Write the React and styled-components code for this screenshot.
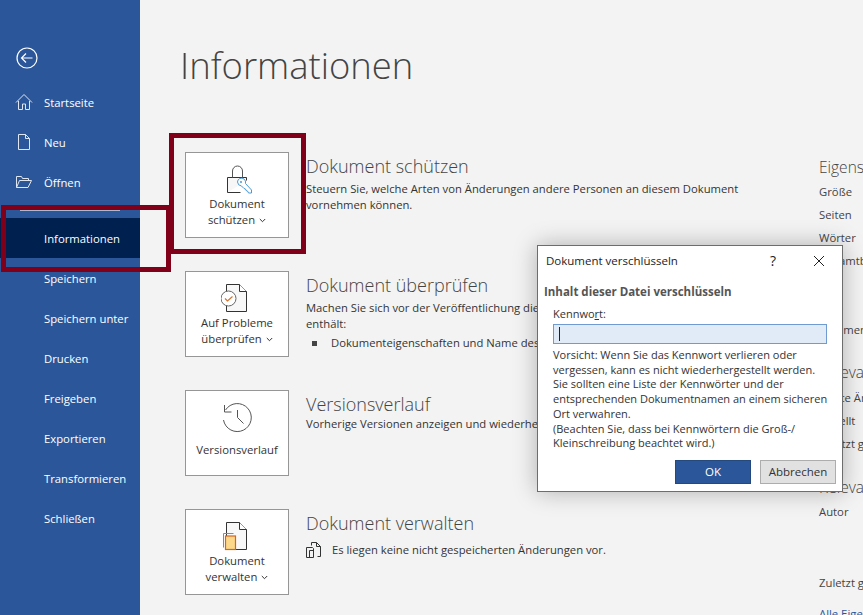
import React from 'react';
import styled, { createGlobalStyle } from 'styled-components';

const GlobalStyle = createGlobalStyle`
  html, body { margin: 0; padding: 0; background: #f3f3f3; }
  body { font-family: "Open Sans", "Noto Sans", sans-serif; font-size: 12px; color: #444; }
`;

const Page = styled.div`
  position: relative;
  display: flex;
  width: 863px;
  height: 615px;
  overflow: hidden;
  background: #f3f3f3;
`;

// Left blue backstage nav
const Sidebar = styled.nav`
  flex: 0 0 140px;
  display: flex;
  flex-direction: column;
  background: #2b579a;
  color: #fff;
  padding-top: 46px;
`;
const BackButton = styled.div`
  height: 24px;
  padding-left: 15px;
  margin-bottom: 12px;
`;
const NavItem = styled.div`
  display: flex;
  align-items: center;
  height: 40px;
  font-size: 11.3px;
  background: ${({ $active }) => ($active ? '#002050' : 'transparent')};
`;
const NavIcon = styled.span`
  flex: 0 0 44px;
  display: flex;
  justify-content: center;
  padding-left: 12px;
  box-sizing: border-box;
  padding-right: 8px;
`;
const NavRule = styled.div`
  height: 1px;
  margin: 8px 20px 7px;
  background: #a9b9d2;
`;

const Main = styled.main`
  flex: 0 0 679px;
  padding-left: 40px;
  box-sizing: border-box;
`;
const Title = styled.h1`
  margin: 36px 0 58px;
  height: 58px;
  font-size: 36.4px;
  line-height: 58px;
  font-weight: 300;
  color: #444;
`;
const Sections = styled.div`
  display: flex;
  flex-direction: column;
  gap: 33px;
  margin-left: 5px;
`;
const Section = styled.section`
  display: flex;
  gap: 17px;
  height: 86px;
  width: 634px;
`;
const TileButton = styled.div`
  flex: 0 0 104px;
  box-sizing: border-box;
  height: 86px;
  display: flex;
  flex-direction: column;
  align-items: center;
  padding-top: 11px;
  background: #fff;
  border: 1px solid #969696;
`;
const TileIcon = styled.div`
  height: 32px;
  svg { display: block; }
`;
const TileLabel = styled.div`
  height: 32px;
  display: flex;
  flex-direction: column;
  justify-content: center;
  text-align: center;
  font-size: 11.3px;
  line-height: 16px;
  white-space: nowrap;
  color: #333;
`;
const SectionBody = styled.div`
  flex: 1;
  min-width: 0;
  font-size: 11.25px;
  line-height: 16px;
  color: #333;
`;
const SectionTitle = styled.h2`
  margin: 2px 0 3px;
  font-size: 18px;
  line-height: 24px;
  font-weight: 300;
  color: #444;
`;
const Description = styled.p`
  margin: ${({ $top }) => $top || 0}px 0 0;
  width: 445px;
`;
const Bullet = styled.div`
  display: flex;
  align-items: center;
  gap: 14px;
  padding-left: 6px;
  margin-top: 3px;
  white-space: nowrap;
  &::before {
    content: '';
    width: 5px;
    height: 5px;
    background: #444;
  }
`;
const NoteRow = styled.div`
  display: flex;
  align-items: center;
  gap: 11px;
  margin-top: 7px;
  svg { display: block; }
`;

// Right hand properties column, runs off the window edge
const Props = styled.aside`
  flex: 0 0 200px;
  padding-top: 154px;
  white-space: nowrap;
`;
const PropsTitle = styled.div`
  height: 26px;
  line-height: 26px;
  font-size: 15.5px;
  font-weight: 300;
  color: #444;
  margin-top: ${({ $top }) => $top || 0}px;
`;
const PropRow = styled.div`
  height: 23px;
  line-height: 23px;
  font-size: 11.3px;
  color: #444;
  margin-top: ${({ $top }) => $top || 0}px;
`;
const PropLink = styled(PropRow)`
  color: #2b579a;
`;

// Red annotation frames painted over the shot
const Frame = styled.div`
  position: absolute;
  box-sizing: border-box;
  left: ${({ $x }) => $x}px;
  top: ${({ $y }) => $y}px;
  width: ${({ $w }) => $w}px;
  height: ${({ $h }) => $h}px;
  border: 5px solid #7f0018;
  pointer-events: none;
`;

const Dialog = styled.div`
  position: absolute;
  left: 537px;
  top: 245px;
  width: 306px;
  height: 247px;
  box-sizing: border-box;
  background: #fff;
  border: 1px solid #6d6d6d;
  box-shadow: 0 0 22px rgba(0, 0, 0, 0.28);
  display: flex;
  flex-direction: column;
  padding: 0 6px;
  color: #333;
`;
const DialogBar = styled.div`
  display: flex;
  align-items: center;
  height: 29px;
  padding-left: 2px;
  font-size: 11.5px;
  color: #222;
`;
const DialogTitle = styled.span`
  flex: 1;
`;
const DialogHelp = styled.span`
  width: 58px;
  font-size: 14px;
  text-align: center;
`;
const DialogClose = styled.span`
  width: 34px;
  display: flex;
  justify-content: center;
`;
const DialogHeading = styled.div`
  margin-top: 9px;
  font-size: 11.5px;
  line-height: 16px;
  font-weight: 700;
  color: #555;
`;
const DialogInner = styled.div`
  padding: 0 9px;
  font-size: 11px;
  line-height: 14.7px;
`;
const FieldLabel = styled.label`
  display: block;
  margin-top: 6px;
  line-height: 16px;
  font-size: 11px;
  u { text-underline-offset: 1px; }
`;
const PasswordInput = styled.div`
  box-sizing: border-box;
  height: 20px;
  margin-top: 2px;
  border: 1px solid #6f9bd1;
  background: #e1ebf7;
  padding: 2px 5px;
  &::before {
    content: '';
    display: block;
    width: 1px;
    height: 14px;
    background: #222;
  }
`;
const Warning = styled.div`
  margin-top: 4px;
  white-space: nowrap;
`;
const DialogButtons = styled.div`
  display: flex;
  justify-content: flex-end;
  gap: 9px;
  margin-top: 9px;
`;
const DialogButton = styled.div`
  box-sizing: border-box;
  width: 76px;
  height: 24px;
  display: flex;
  align-items: center;
  justify-content: center;
  font-size: 11.5px;
  background: ${({ $primary }) => ($primary ? '#2b579a' : '#e1e1e1')};
  color: ${({ $primary }) => ($primary ? '#fff' : '#333')};
  border: 1px solid ${({ $primary }) => ($primary ? '#24497f' : '#adadad')};
`;

const Line = { fill: 'none', stroke: 'currentColor', strokeWidth: 1 };

const BackIcon = () => (
  <svg width="24" height="24" viewBox="0 0 24 24" color="#fff">
    <circle cx="12" cy="12" r="10" {...Line} strokeWidth="1.2" />
    <path d="M17.5 12H6.5M11 7.5 6.5 12l4.5 4.5" {...Line} strokeWidth="1.2" />
  </svg>
);
const HomeIcon = () => (
  <svg width="18" height="18" viewBox="0 0 18 18" color="#dfe6f0">
    <path d="M1 9.500 9 1.500l8 8M3.500 8v8.500h4V11h3v5.500h4V8" {...Line} />
  </svg>
);
const DocIcon = () => (
  <svg width="14" height="18" viewBox="0 0 14 18" color="#dfe6f0">
    <path d="M1.500 1.500h7l4 4v11h-11zM8.500 1.500v4h4" {...Line} />
  </svg>
);
const FolderIcon = () => (
  <svg width="18" height="14" viewBox="0 0 18 14" color="#dfe6f0">
    <path d="M1.500 12.500V1.500h5l1 2h6v2M1.500 12.500h11.500l3.500-7H4.500z" {...Line} />
  </svg>
);

const LockIcon = () => (
  <svg width="32" height="32" viewBox="0 0 32 32">
    <path d="M6.500 28.500v-15h19v3" fill="#f7f7f7" stroke="#333" />
    <path d="M6.500 28.500h13" fill="none" stroke="#333" />
    <path d="M11.500 13.500V7a5 5 0 0 1 10 0v6.500" fill="none" stroke="#555" />
    <path d="M16.500 18a4 4 0 0 1 6.500-3 4.500 4.500 0 0 1 1.500 4.500l6 6.500v3h-3l-1-2-1.500-.5-.5-1.500-1.500-.5-2.500-2.500a4.500 4.500 0 0 1-4-4z" fill="#fff" stroke="#4a9ad8" />
    <circle cx="20" cy="18" r="1" fill="#4a9ad8" />
  </svg>
);
const CheckDocIcon = () => (
  <svg width="32" height="32" viewBox="0 0 32 32">
    <path d="M5.500 1.500h13l7 7v20h-20z" fill="#f8f8f8" stroke="#333" />
    <path d="M18.500 1.500v7h7" fill="#fff" stroke="#333" />
    <circle cx="7.500" cy="15.500" r="7.500" fill="#fff" stroke="#666" />
    <path d="M4 15.500l2.500 2.500 5-4.500" fill="none" stroke="#d9722b" strokeWidth="1.200" />
  </svg>
);
const HistoryIcon = () => (
  <svg width="32" height="32" viewBox="0 0 32 32">
    <path d="M4.500 8A14 14 0 1 1 2.500 18" fill="none" stroke="#555" />
    <path d="M3.500 3v7h7M16.500 8v7.500l6 6" fill="none" stroke="#555" />
  </svg>
);
const ManageIcon = () => (
  <svg width="32" height="32" viewBox="0 0 32 32">
    <path d="M5.500 1.500h13l7 7v20h-20z" fill="#f8f8f8" stroke="#333" />
    <path d="M18.500 1.500v7h7" fill="#fff" stroke="#333" />
    <path d="M2.500 26.500v-14h10" fill="none" stroke="#d9722b" />
    <rect x="4.500" y="15" width="10" height="13.500" fill="#fbd88a" stroke="#d9631c" strokeWidth="1.200" />
  </svg>
);
const PagesIcon = () => (
  <svg width="15" height="16" viewBox="0 0 15 16" color="#333">
    <path d="M5.500 3.500v-3h5l4 4v10h-3M10.500.5v4h4" {...Line} />
    <path d="M.5 5.500h6l1 1v9h-7zM3.500 8.500h4M3.500 8.500v7" {...Line} />
  </svg>
);
const CloseIcon = () => (
  <svg width="12" height="12" viewBox="0 0 12 12" color="#222">
    <path d="M1 1l10 10M11 1 1 11" {...Line} />
  </svg>
);
const Chevron = () => (
  <svg width="7" height="5" viewBox="0 0 7 5" color="#333" style={{ marginLeft: 4, marginBottom: 1 }}>
    <path d="M.8 1 3.500 3.700 6.200 1" {...Line} />
  </svg>
);

const navItems = ['Speichern', 'Speichern unter', 'Drucken', 'Freigeben', 'Exportieren', 'Transformieren', 'Schließen'];

export default function App() {
  return (
    <Page>
      <GlobalStyle />
      <Sidebar>
        <BackButton><BackIcon /></BackButton>
        <NavItem><NavIcon><HomeIcon /></NavIcon>Startseite</NavItem>
        <NavItem><NavIcon><DocIcon /></NavIcon>Neu</NavItem>
        <NavItem><NavIcon><FolderIcon /></NavIcon>Öffnen</NavItem>
        <NavRule />
        <NavItem $active><NavIcon />Informationen</NavItem>
        {navItems.map((item) => (
          <NavItem key={item}><NavIcon />{item}</NavItem>
        ))}
      </Sidebar>

      <Main>
        <Title>Informationen</Title>
        <Sections>
          <Section>
            <TileButton>
              <TileIcon><LockIcon /></TileIcon>
              <TileLabel><div>Dokument</div><div>schützen<Chevron /></div></TileLabel>
            </TileButton>
            <SectionBody>
              <SectionTitle>Dokument schützen</SectionTitle>
              <Description>Steuern Sie, welche Arten von Änderungen andere Personen an diesem Dokument vornehmen können.</Description>
            </SectionBody>
          </Section>
          <Section>
            <TileButton>
              <TileIcon><CheckDocIcon /></TileIcon>
              <TileLabel><div>Auf Probleme</div><div>überprüfen<Chevron /></div></TileLabel>
            </TileButton>
            <SectionBody>
              <SectionTitle>Dokument überprüfen</SectionTitle>
              <Description>Machen Sie sich vor der Veröffentlichung dieser Datei bewusst, dass sie Folgendes<br />enthält:</Description>
              <Bullet>Dokumenteigenschaften und Name des Autors</Bullet>
            </SectionBody>
          </Section>
          <Section>
            <TileButton>
              <TileIcon><HistoryIcon /></TileIcon>
              <TileLabel>Versionsverlauf</TileLabel>
            </TileButton>
            <SectionBody>
              <SectionTitle>Versionsverlauf</SectionTitle>
              <Description $top={-3}>Vorherige Versionen anzeigen und wiederherstellen.</Description>
            </SectionBody>
          </Section>
          <Section>
            <TileButton>
              <TileIcon><ManageIcon /></TileIcon>
              <TileLabel><div>Dokument</div><div>verwalten<Chevron /></div></TileLabel>
            </TileButton>
            <SectionBody>
              <SectionTitle>Dokument verwalten</SectionTitle>
              <NoteRow><PagesIcon />Es liegen keine nicht gespeicherten Änderungen vor.</NoteRow>
            </SectionBody>
          </Section>
        </Sections>
      </Main>

      <Props>
        <PropsTitle>Eigenschaften</PropsTitle>
        <PropRow>Größe</PropRow>
        <PropRow>Seiten</PropRow>
        <PropRow>Wörter</PropRow>
        <PropRow>Gesamtbearbeitungszeit</PropRow>
        <PropRow>Titel</PropRow>
        <PropRow>Tags</PropRow>
        <PropRow>Kommentare</PropRow>
        <PropsTitle $top={18}>Relevante Datumsangaben</PropsTitle>
        <PropRow $top={1}>Letzte Änderung</PropRow>
        <PropRow>Erstellt</PropRow>
        <PropRow>Zuletzt gedruckt</PropRow>
        <PropsTitle $top={19}>Relevante Personen</PropsTitle>
        <PropRow>Autor</PropRow>
        <PropRow $top={48}>Zuletzt geändert von</PropRow>
        <PropLink $top={8}>Alle Eigenschaften anzeigen</PropLink>
      </Props>

      <Frame $x={169} $y={133} $w={137} $h={121} />
      <Frame $x={1} $y={205} $w={170} $h={67} />

      <Dialog>
        <DialogBar>
          <DialogTitle>Dokument verschlüsseln</DialogTitle>
          <DialogHelp>?</DialogHelp>
          <DialogClose><CloseIcon /></DialogClose>
        </DialogBar>
        <DialogHeading>Inhalt dieser Datei verschlüsseln</DialogHeading>
        <DialogInner>
          <FieldLabel>Kennwo<u>r</u>t:</FieldLabel>
          <PasswordInput />
          <Warning>
            Vorsicht: Wenn Sie das Kennwort verlieren oder<br />
            vergessen, kann es nicht wiederhergestellt werden.<br />
            Sie sollten eine Liste der Kennwörter und der<br />
            entsprechenden Dokumentnamen an einem sicheren<br />
            Ort verwahren.<br />
            (Beachten Sie, dass bei Kennwörtern die Groß-/<br />
            Kleinschreibung beachtet wird.)
          </Warning>
        </DialogInner>
        <DialogButtons>
          <DialogButton $primary>OK</DialogButton>
          <DialogButton>Abbrechen</DialogButton>
        </DialogButtons>
      </Dialog>
    </Page>
  );
}
